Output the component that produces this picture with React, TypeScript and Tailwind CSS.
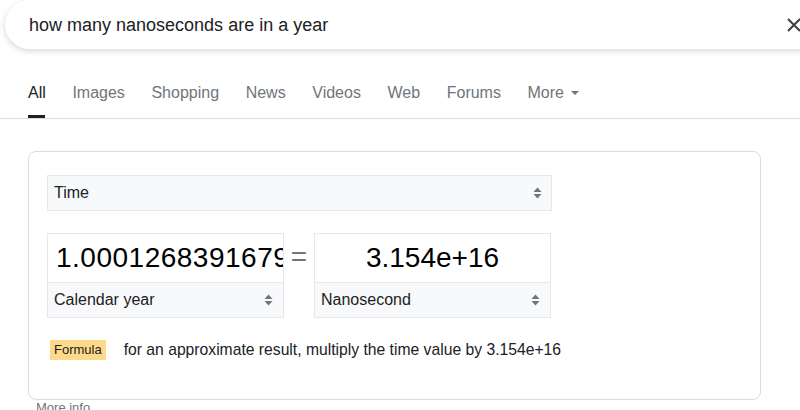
import React from 'react';

function UpDown() {
  return (
    <svg width="9" height="12" viewBox="0 0 9 12" className="shrink-0">
      <path d="M4.5 0.5 L8.5 5 L0.5 5 Z" fill="#70757a" />
      <path d="M4.5 11.5 L8.5 7 L0.5 7 Z" fill="#70757a" />
    </svg>
  );
}

export default function App() {
  const tabs = ['Images', 'Shopping', 'News', 'Videos', 'Web', 'Forums'];

  return (
    <div className="w-[800px] h-[410px] overflow-hidden bg-white text-[#202124] font-['Liberation_Sans',Arial,sans-serif]">
      {/* Search bar */}
      <div className="ml-[5px] w-[830px] h-[49px] rounded-full bg-white shadow-[0_2px_5px_1px_rgba(64,60,67,0.16)] flex items-center justify-between pl-[24px] pr-[34px]">
        <span className="text-[18px] text-[#202124] leading-none">how many nanoseconds are in a year</span>
        <svg width="14" height="14" viewBox="0 0 14 14">
          <path d="M1 1 L13 13 M13 1 L1 13" stroke="#3c4043" strokeWidth="2" />
        </svg>
      </div>

      {/* Tabs */}
      <div className="h-[70px] border-b border-[#dadce0] flex items-end pl-[28px] gap-[26.6px]">
        <div className="flex flex-col items-start">
          <span className="text-[16px] text-[#202124] leading-none">All</span>
          <div className="mt-[14px] w-[17px] h-[3px] bg-[#202124]" />
        </div>
        {tabs.map((t) => (
          <span key={t} className="text-[16px] text-[#70757a] leading-none mb-[17px]">{t}</span>
        ))}
        <span className="flex items-center gap-[7px] text-[16px] text-[#70757a] leading-none mb-[17px]">
          More
          <svg width="8" height="4" viewBox="0 0 8 4">
            <path d="M0 0 L8 0 L4 4 Z" fill="#70757a" />
          </svg>
        </span>
      </div>

      {/* Converter card */}
      <div className="ml-[28px] mt-[32px] w-[733px] h-[249px] border border-[#dadce0] rounded-[8px] pl-[18px] pt-[23px]">
        <div className="w-[505px] h-[36px] bg-[#f8f9fa] border border-[#e6e8eb] flex items-center justify-between pl-[6px] pr-[9px]">
          <span className="text-[16px] text-[#202124]">Time</span>
          <UpDown />
        </div>

        <div className="mt-[22px] flex items-start">
          <div className="w-[237px] border border-[#e6e8eb]">
            <div className="h-[48px] flex items-center pl-[8px] overflow-hidden whitespace-nowrap">
              <span className="text-[28px] tracking-[0.5px] text-black">1.0001268391679</span>
            </div>
            <div className="h-[35px] bg-[#f8f9fa] border-t border-[#e6e8eb] flex items-center justify-between pl-[6px] pr-[10px]">
              <span className="text-[16px] text-[#202124]">Calendar year</span>
              <UpDown />
            </div>
          </div>
          <div className="w-[30px] h-[48px] flex items-center justify-center text-[28px] text-[#70757a]">=</div>
          <div className="w-[237px] border border-[#e6e8eb]">
            <div className="h-[48px] flex items-center justify-center">
              <span className="text-[28px] text-black">3.154e+16</span>
            </div>
            <div className="h-[35px] bg-[#f8f9fa] border-t border-[#e6e8eb] flex items-center justify-between pl-[6px] pr-[10px]">
              <span className="text-[16px] text-[#202124]">Nanosecond</span>
              <UpDown />
            </div>
          </div>
        </div>

        <div className="mt-[20px] flex items-center">
          <span className="ml-[3px] h-[20px] px-[4px] bg-[#fdd98a] text-[13px] text-[#202124] flex items-center">Formula</span>
          <span className="ml-[18px] text-[15.7px] text-[#202124]">for an approximate result, multiply the time value by 3.154e+16</span>
        </div>
      </div>

      <div className="ml-[36px] mt-[1px] text-[13px] leading-[14px] text-[#70757a]">More info</div>
    </div>
  );
}
